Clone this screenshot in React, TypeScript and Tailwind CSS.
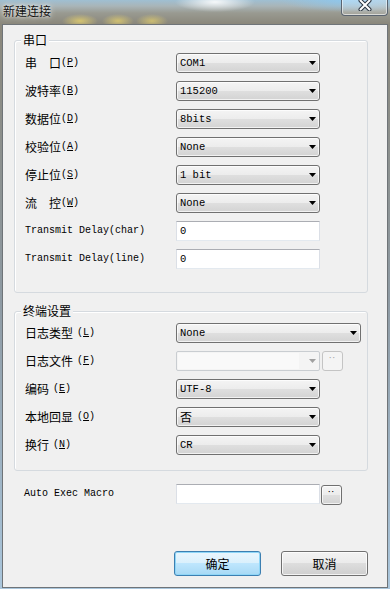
import type { ReactNode } from 'react';

const cjk = "font-['Noto_Sans_CJK_SC','Noto_Sans',sans-serif]";
const mono = "font-['Liberation_Mono','Noto_Sans_CJK_SC',monospace]";

function Arrow({ disabled }: { disabled?: boolean }) {
  return (
    <svg width="7" height="4" viewBox="0 0 7 4" className="shrink-0">
      <path d="M0 0h7L3.5 4z" fill={disabled ? '#a0a0a0' : '#000'} />
    </svg>
  );
}

function Label({ text, k, gap }: { text: string; k: string; gap?: boolean }) {
  return (
    <div className="flex items-center h-[20px] text-black">
      <span className={`${cjk} text-[12px] leading-none`}>{text}</span>
      <span className={`${mono} text-[10px] leading-none ${gap ? 'ml-[4px]' : ''}`}>
        (<u className="underline-offset-1">{k}</u>)
      </span>
    </div>
  );
}

function MonoLabel({ children }: { children: ReactNode }) {
  return <div className={`${mono} text-[10px] leading-none h-[20px] flex items-center text-black`}>{children}</div>;
}

function Combo({ value, wide, cjkValue }: { value: string; wide?: boolean; cjkValue?: boolean }) {
  return (
    <div
      className={`${wide ? 'w-[185px]' : 'w-[144px]'} h-[20px] rounded-[3px] border border-[#707070] bg-[linear-gradient(to_bottom,#f4f4f4_0%,#ececec_50%,#dfdfdf_50%,#d3d3d3_100%)] shadow-[inset_0_0_0_1px_rgba(255,255,255,0.7)] flex items-center justify-between pl-[3px] pr-[3px]`}
    >
      <span className={`${cjkValue ? `${cjk} text-[12px]` : `${mono} text-[10.5px]`} leading-none text-black`}>{value}</span>
      <Arrow />
    </div>
  );
}

function TextBox({ value }: { value?: string }) {
  return (
    <div className="w-[144px] h-[20px] bg-white border border-[#dbdfe6] border-t-[#abadb3] border-b-[#e3e9ef] flex items-center pl-[3px]">
      <span className={`${mono} text-[10.5px] leading-none text-black`}>{value}</span>
    </div>
  );
}

function DotsButton({ disabled }: { disabled?: boolean }) {
  return (
    <div
      className={`w-[21px] h-[20px] rounded-[3px] border flex justify-center pt-[3px] ${
        disabled
          ? 'border-[#c4c4c4] bg-[#f4f4f4] text-[#a8a8a8]'
          : 'border-[#707070] bg-[linear-gradient(to_bottom,#f4f4f4_0%,#ececec_50%,#dfdfdf_50%,#d3d3d3_100%)] text-black shadow-[inset_0_0_0_1px_rgba(255,255,255,0.7)]'
      }`}
    >
      <span className="text-[9px] leading-[6px] tracking-[1px]">··</span>
    </div>
  );
}

function Group({ title, children, pt, pb }: { title: string; children: ReactNode; pt: string; pb: string }) {
  return (
    <div className={`relative ml-[11px] w-[354px] rounded-[3px] border border-[#d5dadf] shadow-[inset_1px_1px_0_#ffffff] ${pt} ${pb} pl-[10px]`}>
      <span className={`${cjk} absolute -top-[9px] left-[6px] px-[2px] bg-[#f0f0f0] text-[12px] leading-[16px] text-black`}>{title}</span>
      <div className="flex flex-col gap-[8px]">{children}</div>
    </div>
  );
}

function Row({ label, children }: { label: ReactNode; children: ReactNode }) {
  return (
    <div className="flex items-center h-[20px]">
      <div className="w-[151px] shrink-0">{label}</div>
      {children}
    </div>
  );
}

export default function App() {
  return (
    <div className="relative w-[390px] h-[589px] overflow-hidden pt-[24px] pl-[2px] bg-[radial-gradient(ellipse_40px_10px_at_215px_2px,rgba(255,255,255,0.9),transparent),radial-gradient(ellipse_70px_12px_at_350px_0px,rgba(140,200,240,0.9),transparent),radial-gradient(ellipse_18px_7px_at_80px_21px,rgba(225,205,110,0.85),transparent),radial-gradient(ellipse_16px_7px_at_118px_21px,rgba(225,205,110,0.8),transparent),radial-gradient(ellipse_16px_7px_at_152px_21px,rgba(225,205,110,0.75),transparent),linear-gradient(to_bottom,#9fbfd2_0px,#a9b5b8_6px,#999a91_13px,#8a877b_24px,#8e9aa3_300px,#aac6dc_589px)]">
      <div className={`${cjk} absolute top-[3px] left-[3px] text-[12px] leading-[16px] text-[#111] [text-shadow:0_0_6px_rgba(255,255,255,0.9),0_0_3px_rgba(255,255,255,0.8)]`}>
        新建连接
      </div>
      <div className="absolute top-0 right-[2px] w-[47px] h-[16px] rounded-b-[4px] border border-t-0 border-[#5a6470] bg-[linear-gradient(to_bottom,rgba(255,255,255,0.3),rgba(255,255,255,0.12))] shadow-[inset_0_-1px_0_rgba(255,255,255,0.6),inset_1px_0_0_rgba(255,255,255,0.5),inset_-1px_0_0_rgba(255,255,255,0.5)] flex justify-center">
        <svg width="14" height="11" viewBox="0 0 14 11">
          <path d="M2.5 0.5L11.5 9.5M11.5 0.5L2.5 9.5" stroke="#2a3440" strokeWidth="4" strokeLinecap="round" />
          <path d="M2.5 0.5L11.5 9.5M11.5 0.5L2.5 9.5" stroke="#ffffff" strokeWidth="2" strokeLinecap="round" />
        </svg>
      </div>

      <div className="w-[386px] h-[564px] border border-[#6f7478] bg-[#f0f0f0] flex flex-col">
        <div className="mt-[15px]">
          <Group title="串口" pt="pt-[12px]" pb="pb-[23px]">
            <Row label={<Label text="串　口" k="P" />}>
              <Combo value="COM1" />
            </Row>
            <Row label={<Label text="波特率" k="B" />}>
              <Combo value="115200" />
            </Row>
            <Row label={<Label text="数据位" k="D" />}>
              <Combo value="8bits" />
            </Row>
            <Row label={<Label text="校验位" k="A" />}>
              <Combo value="None" />
            </Row>
            <Row label={<Label text="停止位" k="S" />}>
              <Combo value="1 bit" />
            </Row>
            <Row label={<Label text="流　控" k="W" />}>
              <Combo value="None" />
            </Row>
            <Row label={<MonoLabel>Transmit Delay(char)</MonoLabel>}>
              <TextBox value="0" />
            </Row>
            <Row label={<MonoLabel>Transmit Delay(line)</MonoLabel>}>
              <TextBox value="0" />
            </Row>
          </Group>
        </div>

        <div className="mt-[18px]">
          <Group title="终端设置" pt="pt-[11px]" pb="pb-[15px]">
            <Row label={<Label text="日志类型" k="L" gap />}>
              <Combo value="None" wide />
            </Row>
            <Row label={<Label text="日志文件" k="F" gap />}>
              <div className="w-[144px] h-[20px] rounded-[2px] border border-[#c9cdd1] bg-[#f4f4f4] flex items-center justify-end pr-[3px]">
                <div className="flex-1 h-[16px] ml-[1px] mr-[10px] bg-[#f9f9f9]" />
                <Arrow disabled />
              </div>
              <div className="ml-[2px]">
                <DotsButton disabled />
              </div>
            </Row>
            <Row label={<Label text="编码" k="E" gap />}>
              <Combo value="UTF-8" />
            </Row>
            <Row label={<Label text="本地回显" k="O" gap />}>
              <Combo value="否" cjkValue />
            </Row>
            <Row label={<Label text="换行" k="N" gap />}>
              <Combo value="CR" />
            </Row>
          </Group>
        </div>

        <div className="mt-[13px] ml-[21px] flex items-center h-[20px]">
          <div className="w-[152px] shrink-0">
            <MonoLabel>Auto Exec Macro</MonoLabel>
          </div>
          <TextBox />
          <div className="ml-[1px] mt-[1px]">
            <DotsButton />
          </div>
        </div>

        <div className="mt-[47px] flex justify-end gap-[20px] pr-[19px]">
          <button className={`${cjk} w-[87px] h-[25px] rounded-[3px] border border-[#3c7fb1] bg-[linear-gradient(to_bottom,#eaf6fd_0%,#d9f0fc_50%,#bee6fd_50%,#a7d9f5_100%)] shadow-[inset_0_0_0_1px_#8fd6f7] text-[12px] leading-none text-black`}>
            确定
          </button>
          <button className={`${cjk} w-[87px] h-[25px] rounded-[3px] border border-[#707070] bg-[linear-gradient(to_bottom,#f2f2f2_0%,#ebebeb_50%,#dddddd_50%,#cfcfcf_100%)] shadow-[inset_0_0_0_1px_rgba(255,255,255,0.75)] text-[12px] leading-none text-black`}>
            取消
          </button>
        </div>
      </div>
    </div>
  );
}
